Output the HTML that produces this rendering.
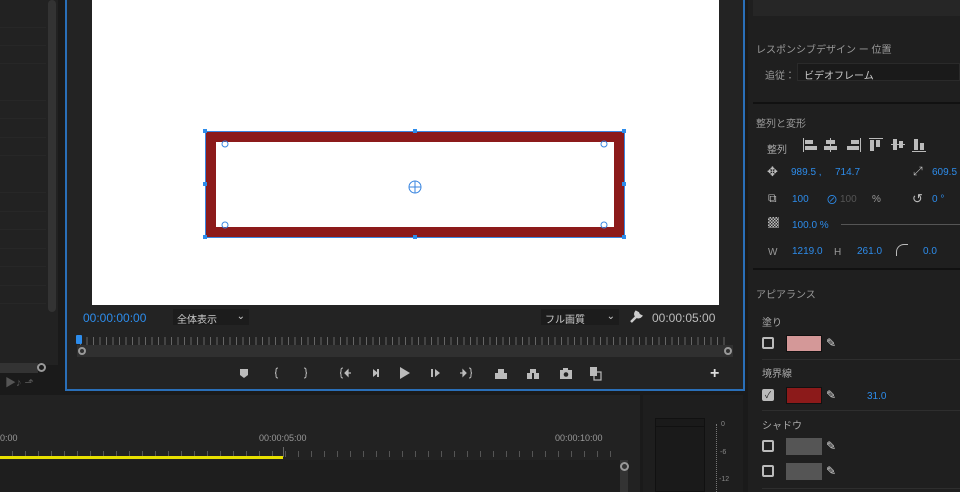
<!DOCTYPE html>
<html><head><meta charset="utf-8"><style>
*{margin:0;padding:0;box-sizing:border-box}
body{width:960px;height:492px;background:#1a1a1a;position:relative;overflow:hidden;font-family:"Liberation Sans","Noto Sans CJK JP",sans-serif;font-size:10px;color:#aaa}
.a{position:absolute}
.blue{color:#2d8ceb}
.row{position:absolute;left:0;width:46px;height:1px;background:#272727}
.cb{position:absolute;width:12px;height:12px;border:2px solid #bbb;border-radius:2px}
.sw{position:absolute;width:36px;height:17px}
</style></head><body>
<div class="a" style="left:0;top:0;width:58px;height:365px;background:#222"></div>
<div class="row" style="top:27px"></div><div class="row" style="top:45px"></div><div class="row" style="top:63px"></div><div class="row" style="top:100px"></div><div class="row" style="top:118px"></div><div class="row" style="top:137px"></div><div class="row" style="top:155px"></div><div class="row" style="top:192px"></div><div class="row" style="top:211px"></div><div class="row" style="top:229px"></div><div class="row" style="top:248px"></div><div class="row" style="top:266px"></div><div class="row" style="top:285px"></div><div class="row" style="top:303px"></div>
<div class="a" style="left:48px;top:0;width:8px;height:312px;background:#333;border-radius:4px"></div>
<div class="a" style="left:0;top:363px;width:38px;height:10px;background:#333"></div>
<div class="a" style="left:37px;top:363px;width:9px;height:9px;border:2px solid #999;border-radius:50%"></div>
<div class="a" style="left:5px;top:374px;color:#555;font-size:11px">▶♪ ⬏</div>
<div class="a" style="left:65px;top:-2px;width:680px;height:393px;border:2px solid #2a6fb8;background:#232323"></div>
<div class="a" style="left:92px;top:0;width:627px;height:305px;background:#fff"></div>
<div class="a" style="left:205px;top:131px;width:420px;height:107px;border:11px solid #8c1a1a;background:#fff"></div>
<div class="a" style="left:205px;top:131px;width:420px;height:107px;border:1px solid #3a86e0"></div>
<svg class="a" style="left:200px;top:126px" width="430" height="117">
<g fill="#2d8ceb"><rect x="3" y="3" width="4" height="4"/><rect x="213" y="3" width="4" height="4"/><rect x="422" y="3" width="4" height="4"/><rect x="3" y="56" width="4" height="4"/><rect x="422" y="56" width="4" height="4"/><rect x="3" y="109" width="4" height="4"/><rect x="213" y="109" width="4" height="4"/><rect x="422" y="109" width="4" height="4"/></g>
<g fill="none" stroke="#3a86e0" stroke-width="1"><circle cx="25" cy="18" r="3"/><circle cx="404" cy="18" r="3"/><circle cx="25" cy="99" r="3"/><circle cx="404" cy="99" r="3"/><circle cx="215" cy="61" r="6"/><path d="M209 61h12M215 55v12"/></g>
</svg>
<div class="a blue" style="left:83px;top:311px;font-size:12px">00:00:00:00</div>
<div class="a" style="left:173px;top:309px;width:76px;height:16px;background:#1c1c1c;color:#ccc;padding:2px 4px;font-size:10px">全体表示 <span style="float:right">⌄</span></div>
<div class="a" style="left:541px;top:309px;width:78px;height:16px;background:#1c1c1c;color:#ccc;padding:2px 4px;font-size:10px">フル画質 <span style="float:right">⌄</span></div>
<svg class="a" style="left:629px;top:310px" width="14" height="14"><path d="M2 12L8 6M7 2a3 3 0 1 0 5 4l-2-1-1-2z" stroke="#ccc" stroke-width="2.5" fill="#ccc"/></svg>
<div class="a" style="left:652px;top:311px;color:#bbb;font-size:12px">00:00:05:00</div>
<div class="a" style="left:80px;top:337px;width:650px;height:8px;background:repeating-linear-gradient(90deg,#666 0 1px,transparent 1px 6.5px)"></div>
<div class="a" style="left:77px;top:345px;width:656px;height:12px;background:#303030"></div>
<div class="a" style="left:76px;top:335px;width:6px;height:9px;background:#2d8ceb;border-radius:1px"></div>
<div class="a" style="left:78px;top:347px;width:8px;height:8px;border:2px solid #999;border-radius:50%"></div>
<div class="a" style="left:724px;top:347px;width:8px;height:8px;border:2px solid #999;border-radius:50%"></div>
<svg class="a" style="left:230px;top:364px" width="500" height="20" fill="#bbb" stroke="#bbb">
<path d="M10 5h8v6l-4 3-4-3z" stroke="none"/>
<path d="M48 4c-2 0-2 1-2 3s-1 2-1 2 1 0 1 2 0 3 2 3M74 4c2 0 2 1 2 3s1 2 1 2-1 0-1 2 0 3-2 3" fill="none" stroke-width="1"/>
<path d="M113 4c-2 0-2 1-2 3s-1 2-1 2 1 0 1 2 0 3 2 3" fill="none"/><path d="M115 9h6M115 9l3-3v6z" stroke-width="1.2"/>
<path d="M149 5v8M148 9l-5-4v8z" stroke="none"/><rect x="147" y="5" width="2" height="8" stroke="none"/>
<path d="M170 3l10 6-10 6z" stroke="none"/>
<rect x="201" y="5" width="2" height="8" stroke="none"/><path d="M205 5l5 4-5 4z" stroke="none"/>
<path d="M230 9h6M236 9l-3-3v6z" stroke-width="1.2"/><path d="M239 4c2 0 2 1 2 3s1 2 1 2-1 0-1 2 0 3-2 3" fill="none"/>
<g stroke="none"><rect x="268" y="5" width="6" height="4"/><rect x="265" y="9" width="12" height="6"/><rect x="300" y="5" width="6" height="4"/><rect x="297" y="9" width="5" height="6"/><rect x="304" y="9" width="5" height="6"/><rect x="330" y="6" width="12" height="9"/><rect x="333" y="4" width="5" height="3"/></g>
<circle cx="336" cy="10.5" r="2.3" fill="#232323" stroke="none"/>
<rect x="360" y="3" width="7" height="9" stroke="none"/><rect x="364" y="8" width="7" height="8" fill="none" stroke-width="1.2"/>
</svg>
<div class="a" style="left:710px;top:365px;color:#ddd;font-size:16px;font-weight:bold">+</div>
<div class="a" style="left:0;top:395px;width:640px;height:97px;background:#222"></div>
<div class="a" style="left:0;top:433px;color:#999;font-size:9px">0:00</div>
<div class="a" style="left:259px;top:433px;color:#999;font-size:9px">00:00:05:00</div>
<div class="a" style="left:555px;top:433px;color:#999;font-size:9px">00:00:10:00</div>
<div class="a" style="left:0;top:451px;width:620px;height:6px;background:repeating-linear-gradient(90deg,transparent 0 12px,#555 12px 13px)"></div>
<div class="a" style="left:283px;top:447px;width:1px;height:10px;background:#666"></div>
<div class="a" style="left:0;top:456px;width:283px;height:3px;background:#e8e000"></div>
<div class="a" style="left:0;top:460px;width:620px;height:32px;background:#1e1e1e"></div>
<div class="a" style="left:620px;top:460px;width:8px;height:32px;background:#333"></div>
<div class="a" style="left:620px;top:462px;width:9px;height:9px;border:2px solid #999;border-radius:50%"></div>
<div class="a" style="left:643px;top:395px;width:100px;height:97px;background:#1e1e1e"></div>
<div class="a" style="left:655px;top:418px;width:50px;height:74px;border:1px solid #111;background:#1a1a1a"></div>
<div class="a" style="left:655px;top:418px;width:50px;height:9px;border:1px solid #111"></div>
<div class="a" style="left:716px;top:424px;height:68px;border-left:1px dotted #777"></div>
<div class="a" style="left:721px;top:421px;color:#888;font-size:7px">0</div>
<div class="a" style="left:720px;top:449px;color:#888;font-size:7px">-6</div>
<div class="a" style="left:719px;top:476px;color:#888;font-size:7px">-12</div>
<div class="a" style="left:748px;top:0;width:212px;height:492px;background:#1f1f1f"></div>
<div class="a" style="left:753px;top:0;width:207px;height:16px;background:#262626"></div>
<div class="a" style="left:756px;top:41px;color:#999;font-size:10px">レスポンシブデザイン ー 位置</div>
<div class="a" style="left:765px;top:67px;color:#999;font-size:10px">追従：</div>
<div class="a" style="left:797px;top:63px;width:163px;height:18px;background:#1a1a1a;border:1px solid #2a2a2a;color:#ccc;padding:3px 6px;font-size:10px">ビデオフレーム</div>
<div class="a" style="left:753px;top:102px;width:207px;height:2px;background:#111"></div>
<div class="a" style="left:756px;top:115px;color:#999;font-size:10px">整列と変形</div>
<div class="a" style="left:767px;top:141px;color:#aaa;font-size:10px">整列</div>
<svg class="a" style="left:800px;top:136px" width="130" height="18" fill="#bbb">
<rect x="3" y="2" width="1" height="14"/><rect x="5" y="4" width="8" height="4"/><rect x="5" y="10" width="12" height="4"/>
<rect x="30" y="2" width="1" height="14"/><rect x="26" y="4" width="9" height="4"/><rect x="24" y="10" width="13" height="4"/>
<rect x="60" y="2" width="1" height="14"/><rect x="51" y="4" width="8" height="4"/><rect x="47" y="10" width="12" height="4"/>
<rect x="69" y="2" width="14" height="1"/><rect x="70" y="4" width="4" height="11"/><rect x="76" y="4" width="4" height="7"/>
<rect x="91" y="8" width="14" height="1"/><rect x="93" y="3" width="4" height="11"/><rect x="99" y="5" width="4" height="7"/>
<rect x="112" y="15" width="14" height="1"/><rect x="114" y="3" width="4" height="11"/><rect x="120" y="7" width="4" height="7"/>
</svg>
<div class="a" style="left:767px;top:164px;color:#bbb;font-size:13px">✥</div>
<div class="a blue" style="left:791px;top:167px">989.5 ,</div>
<div class="a blue" style="left:835px;top:167px">714.7</div>
<div class="a" style="left:913px;top:164px;color:#bbb;font-size:12px">⤢</div>
<div class="a blue" style="left:932px;top:167px">609.5</div>
<div class="a" style="left:768px;top:191px;color:#bbb;font-size:12px">⧉</div>
<div class="a blue" style="left:792px;top:194px">100</div>
<div class="a blue" style="left:826px;top:191px;font-size:12px">⊘</div>
<div class="a" style="left:840px;top:194px;color:#555">100</div>
<div class="a" style="left:872px;top:194px;color:#999">%</div>
<div class="a" style="left:912px;top:191px;color:#bbb;font-size:13px">↺</div>
<div class="a blue" style="left:932px;top:194px">0 °</div>
<div class="a" style="left:768px;top:217px;width:11px;height:11px;background:repeating-conic-gradient(#bbb 0 25%,#333 0 50%) 0 0/3px 3px"></div>
<div class="a blue" style="left:792px;top:220px">100.0 %</div>
<div class="a" style="left:841px;top:224px;width:119px;height:1px;background:#555"></div>
<div class="a" style="left:768px;top:247px;color:#999">W</div>
<div class="a blue" style="left:792px;top:246px">1219.0</div>
<div class="a" style="left:834px;top:247px;color:#999">H</div>
<div class="a blue" style="left:857px;top:246px">261.0</div>
<div class="a" style="left:896px;top:244px;width:12px;height:12px;border-left:1px solid #bbb;border-top:1px solid #bbb;border-radius:8px 0 0 0"></div>
<div class="a blue" style="left:923px;top:246px">0.0</div>
<div class="a" style="left:753px;top:268px;width:207px;height:2px;background:#111"></div>
<div class="a" style="left:756px;top:286px;color:#999;font-size:10px">アピアランス</div>
<div class="a" style="left:762px;top:314px;color:#aaa">塗り</div>
<div class="cb" style="left:762px;top:337px"></div>
<div class="sw" style="left:786px;top:335px;background:#d49898;border:1px solid #111"></div>
<div class="a" style="left:826px;top:336px;color:#ddd;font-size:12px">✎</div>
<div class="a" style="left:762px;top:359px;width:198px;height:1px;background:#2e2e2e"></div>
<div class="a" style="left:762px;top:365px;color:#aaa">境界線</div>
<div class="cb" style="left:762px;top:389px;background:#bbb;color:#222;font-size:9px;line-height:8px;text-align:center">✓</div>
<div class="sw" style="left:786px;top:387px;background:#8c1a1a;border:1px solid #111"></div>
<div class="a" style="left:826px;top:388px;color:#ddd;font-size:12px">✎</div>
<div class="a blue" style="left:867px;top:391px">31.0</div>
<div class="a" style="left:762px;top:410px;width:198px;height:1px;background:#2e2e2e"></div>
<div class="a" style="left:762px;top:417px;color:#aaa">シャドウ</div>
<div class="cb" style="left:762px;top:440px"></div>
<div class="sw" style="left:786px;top:438px;background:#555"></div>
<div class="a" style="left:826px;top:439px;color:#ddd;font-size:12px">✎</div>
<div class="cb" style="left:762px;top:465px"></div>
<div class="sw" style="left:786px;top:463px;background:#555"></div>
<div class="a" style="left:826px;top:464px;color:#ddd;font-size:12px">✎</div>
<div class="a" style="left:762px;top:488px;width:198px;height:1px;background:#2e2e2e"></div>
</body></html>
